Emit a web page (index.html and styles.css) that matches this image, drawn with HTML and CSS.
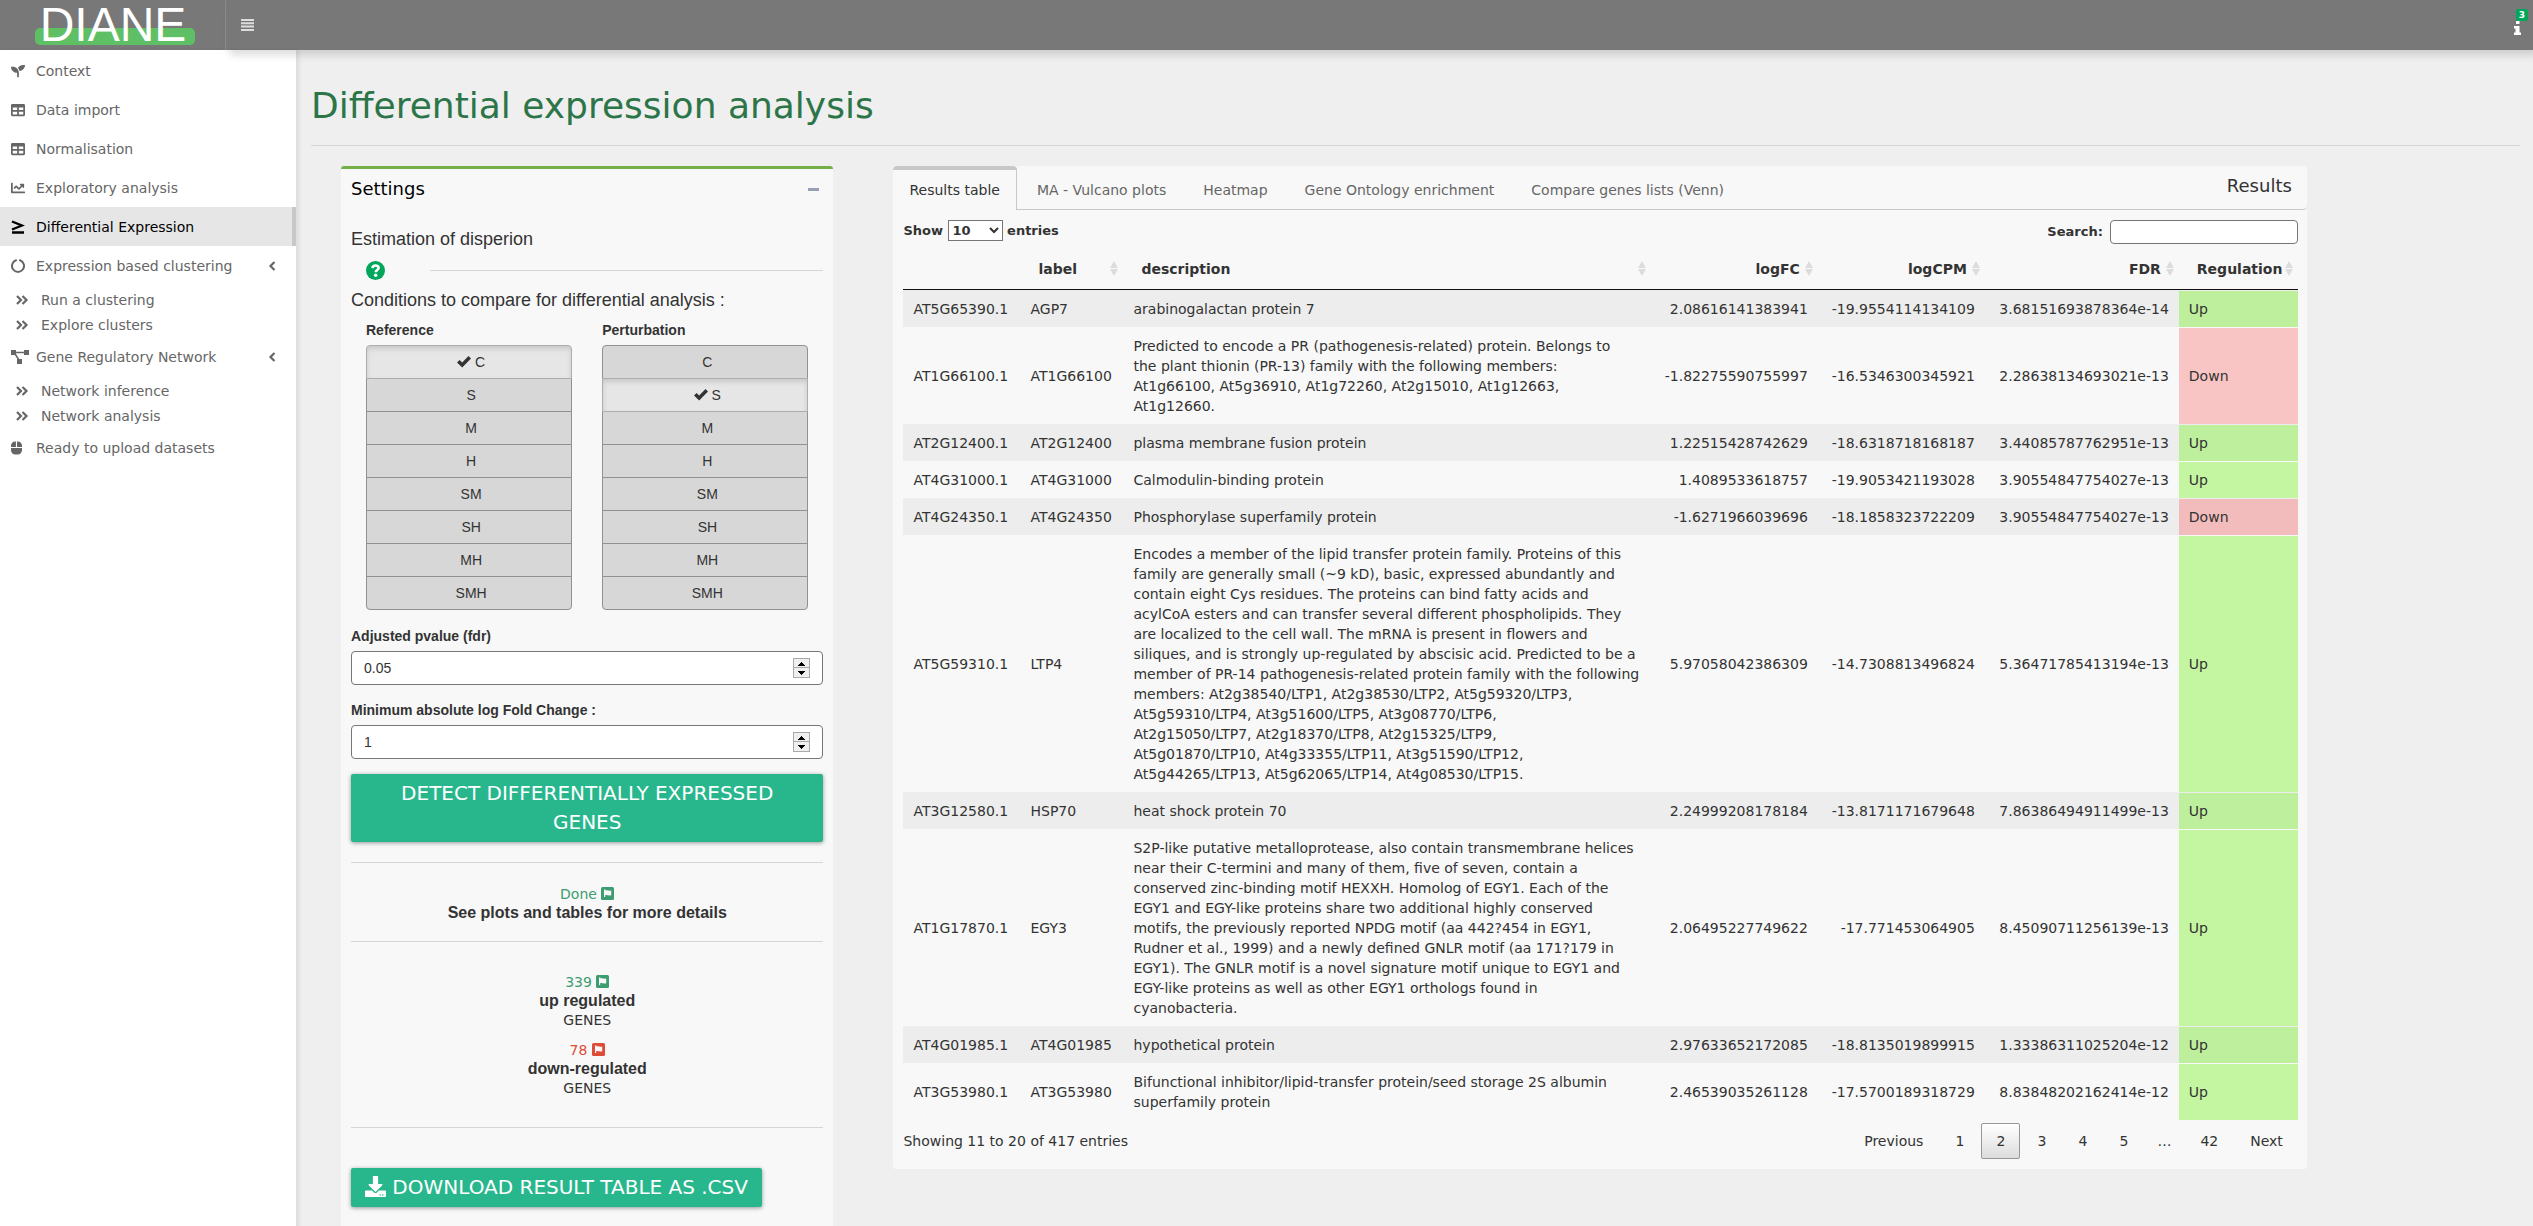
FILE: index.html
```html
<!DOCTYPE html>
<html lang="en">
<head>
<meta charset="utf-8">
<title>DIANE</title>
<link rel="stylesheet" href="styles.css">
</head>
<body>
<svg class="defs" aria-hidden="true">
  <symbol id="i-seedling" viewBox="0 0 512 512"><path d="M64 96H0c0 123.700 100.300 224 224 224v144c0 8.800 7.200 16 16 16h32c8.800 0 16-7.200 16-16V320C288 196.300 187.700 96 64 96zm384-64c-84.200 0-157.400 46.500-195.700 115.200 27.700 30.200 48.200 66.900 59 107.600C424 243.100 512 147.900 512 32h-64z"/></symbol>
  <symbol id="i-table" viewBox="0 0 512 512"><path d="M464 32H48C21.490 32 0 53.490 0 80v352c0 26.510 21.490 48 48 48h416c26.510 0 48-21.490 48-48V80c0-26.510-21.490-48-48-48zM224 416H64v-96h160v96zm0-160H64v-96h160v96zm224 160H288v-96h160v96zm0-160H288v-96h160v96z"/></symbol>
  <symbol id="i-chart" viewBox="0 0 512 512"><path d="M496 384H64V80c0-8.840-7.160-16-16-16H16C7.160 64 0 71.160 0 80v336c0 17.670 14.330 32 32 32h464c8.840 0 16-7.160 16-16v-32c0-8.840-7.160-16-16-16zM464 96H345.940c-21.380 0-32.090 25.850-16.970 40.970l32.400 32.400L288 242.750l-73.370-73.370c-12.500-12.500-32.760-12.500-45.250 0l-68.690 68.690c-6.250 6.250-6.250 16.380 0 22.630l22.620 22.620c6.250 6.250 16.380 6.250 22.630 0L192 237.250l73.370 73.370c12.500 12.500 32.760 12.500 45.250 0l96-96 32.400 32.400c15.120 15.120 40.970 4.410 40.970-16.970V112c.01-8.840-7.150-16-15.990-16z"/></symbol>
  <symbol id="i-gte" viewBox="0 0 14 14"><path d="M1 1.500 11 5.500 1 9.500M1 12.500h12" fill="none" stroke="currentColor" stroke-width="2.400"/></symbol>
  <symbol id="i-notch" viewBox="0 0 14 14"><path d="M5 1.300a6 6 0 1 0 4 0" fill="none" stroke="currentColor" stroke-width="2" stroke-linecap="round"/></symbol>
  <symbol id="i-double" viewBox="0 0 14 14"><path d="M2 3l4 4-4 4M7.500 3l4 4-4 4" fill="none" stroke="currentColor" stroke-width="2.200"/></symbol>
  <symbol id="i-project" viewBox="0 0 18 14"><path d="M0 0h5v5H0zM13 0h5v5h-5zM6 9h5v5H6zM5 1.800h8v1.500H5zM3.500 4.500l1.400-.8L8.300 9l-1.400.8z"/></symbol>
  <symbol id="i-mouse" viewBox="0 0 12 14"><path d="M0 6V4.500A4.500 4.500 0 0 1 4.500 0h.9v6zM6.600 0h.9A4.500 4.500 0 0 1 12 4.500V6H6.600zM0 7h12v2.500A4.500 4.500 0 0 1 7.500 14h-3A4.500 4.500 0 0 1 0 9.500z"/></symbol>
  <symbol id="i-left" viewBox="0 0 8 10"><path d="M6.500 1 2.500 5l4 4" fill="none" stroke="currentColor" stroke-width="2.200"/></symbol>
  <symbol id="i-check" viewBox="0 0 14 12"><path d="M0 6.500 2.600 4l2.600 2.500L11.500 0 14 2.500 5.200 11.500z"/></symbol>
  <symbol id="i-download" viewBox="0 0 512 512"><path d="M216 0h80c13.300 0 24 10.700 24 24v168h87.700c17.800 0 26.700 21.500 14.100 34.100L269.700 378.300c-7.500 7.500-19.800 7.500-27.300 0L90.100 226.100c-12.600-12.600-3.700-34.100 14.100-34.100H192V24c0-13.300 10.700-24 24-24zm296 376v112c0 13.300-10.700 24-24 24H24c-13.300 0-24-10.700-24-24V376c0-13.300 10.700-24 24-24h146.700l49 49c20.100 20.100 52.500 20.100 72.600 0l49-49H488c13.300 0 24 10.700 24 24zm-124 88c0-11-9-20-20-20s-20 9-20 20 9 20 20 20 20-9 20-20zm64 0c0-11-9-20-20-20s-20 9-20 20 9 20 20 20 20-9 20-20z"/></symbol>
  <symbol id="i-flag" viewBox="0 0 13 13"><rect width="13" height="13" rx="1.500"/><path d="M3 2.500h1.200l.6.900c1.500-.5 2.500.8 5.400.1v4.800c-2.600.8-4-.6-6-.1V10H3z" fill="#f8f8f8"/></symbol>
  <symbol id="i-help" viewBox="0 0 20 20"><circle cx="10" cy="10" r="10"/><path d="M6.800 7.600C7 5.500 8.300 4.700 10 4.700c2 0 3.200 1 3.200 2.500 0 2.300-2.900 2.200-2.900 4.600" fill="none" stroke="#fff" stroke-width="2.800"/><circle cx="10.200" cy="15" r="1.800" fill="#fff"/></symbol>
  <symbol id="i-bars" viewBox="0 0 13 12"><path d="M0 0h13v2H0zM0 3.300h13v2H0zM0 6.600h13v2H0zM0 10h13v2H0z"/></symbol>
  <symbol id="i-info" viewBox="0 0 7 14"><path d="M2 0h3.500v3H2zM0 5h5.500v6.500H7V14H0v-2.500h1.500v-4H0z"/></symbol>
  <symbol id="i-sort" viewBox="0 0 8 15"><path d="M4 0l4 7H0zM0 8h8l-4 7z"/></symbol>
</svg>

<header class="topbar">
  <a class="logo" href="#">DIANE</a>
  <nav class="topnav">
    <button class="icon-button" aria-label="Toggle navigation"><svg class="bars"><use href="#i-bars"/></svg></button>
    <a class="info" href="#" aria-label="Information"><svg><use href="#i-info"/></svg><span class="badge">3</span></a>
  </nav>
</header>

<div class="shell">
  <aside class="sidebar">
    <a class="item" href="#"><svg><use href="#i-seedling"/></svg>Context</a>
    <a class="item" href="#"><svg><use href="#i-table"/></svg>Data import</a>
    <a class="item" href="#"><svg><use href="#i-table"/></svg>Normalisation</a>
    <a class="item" href="#"><svg><use href="#i-chart"/></svg>Exploratory analysis</a>
    <a class="item active" href="#"><svg><use href="#i-gte"/></svg>Differential Expression</a>
    <a class="item" href="#"><svg><use href="#i-notch"/></svg>Expression based clustering<svg class="caret"><use href="#i-left"/></svg></a>
    <div class="submenu">
      <a class="subitem" href="#"><svg><use href="#i-double"/></svg>Run a clustering</a>
      <a class="subitem" href="#"><svg><use href="#i-double"/></svg>Explore clusters</a>
    </div>
    <a class="item" href="#"><svg class="wide"><use href="#i-project"/></svg>Gene Regulatory Network<svg class="caret"><use href="#i-left"/></svg></a>
    <div class="submenu">
      <a class="subitem" href="#"><svg><use href="#i-double"/></svg>Network inference</a>
      <a class="subitem" href="#"><svg><use href="#i-double"/></svg>Network analysis</a>
    </div>
    <a class="item" href="#"><svg class="narrow"><use href="#i-mouse"/></svg>Ready to upload datasets</a>
  </aside>

  <main class="content">
    <h1>Differential expression analysis</h1>
    <hr class="title-rule">
    <div class="columns">
      <section class="card settings">
        <div class="card-head"><h2>Settings</h2><button class="collapse" aria-label="Collapse"></button></div>
        <h3>Estimation of disperion</h3>
        <div class="help-row"><button class="help" aria-label="Help"><svg><use href="#i-help"/></svg></button><hr></div>
        <h3>Conditions to compare for differential analysis :</h3>
        <div class="choices">
          <div class="choice">
            <span class="label" id="ref">Reference</span>
            <div class="group" role="group" aria-labelledby="ref">
              <button class="on"><svg><use href="#i-check"/></svg> C</button><button>S</button><button>M</button><button>H</button><button>SM</button><button>SH</button><button>MH</button><button>SMH</button>
            </div>
          </div>
          <div class="choice">
            <span class="label" id="per">Perturbation</span>
            <div class="group" role="group" aria-labelledby="per">
              <button>C</button><button class="on"><svg><use href="#i-check"/></svg> S</button><button>M</button><button>H</button><button>SM</button><button>SH</button><button>MH</button><button>SMH</button>
            </div>
          </div>
        </div>
        <div class="field"><label class="label" for="fdr">Adjusted pvalue (fdr)</label><input id="fdr" type="number" step="0.01" value="0.05"></div>
        <div class="field"><label class="label" for="lfc">Minimum absolute log Fold Change :</label><input id="lfc" type="number" value="1"></div>
        <button class="action">Detect differentially expressed genes</button>
        <hr>
        <div class="stat done"><span class="value green">Done <svg><use href="#i-flag"/></svg></span><strong>See plots and tables for more details</strong></div>
        <hr>
        <div class="stats">
          <div class="stat"><span class="value green">339 <svg><use href="#i-flag"/></svg></span><strong>up regulated</strong><span>GENES</span></div>
          <div class="stat"><span class="value red">78 <svg><use href="#i-flag"/></svg></span><strong>down-regulated</strong><span>GENES</span></div>
        </div>
        <hr>
        <button class="action download"><svg><use href="#i-download"/></svg> Download result table as .csv</button>
      </section>

      <section class="card results">
        <div class="tabs">
          <a class="tab current" href="#">Results table</a>
          <a class="tab" href="#">MA - Vulcano plots</a>
          <a class="tab" href="#">Heatmap</a>
          <a class="tab" href="#">Gene Ontology enrichment</a>
          <a class="tab" href="#">Compare genes lists (Venn)</a>
          <h2>Results</h2>
        </div>
        <div class="panel">
          <div class="controls">
            <label>Show <select><option>10</option></select> entries</label>
            <label class="search">Search:<input type="search"></label>
          </div>
          <table>
            <colgroup><col class="c-id"><col class="c-label"><col><col class="c-num"><col class="c-num"><col class="c-fdr"><col class="c-reg"></colgroup>
            <thead><tr>
              <th></th>
              <th>label<svg><use href="#i-sort"/></svg></th>
              <th>description<svg><use href="#i-sort"/></svg></th>
              <th class="num">logFC<svg><use href="#i-sort"/></svg></th>
              <th class="num">logCPM<svg><use href="#i-sort"/></svg></th>
              <th class="num">FDR<svg><use href="#i-sort"/></svg></th>
              <th>Regulation<svg><use href="#i-sort"/></svg></th>
            </tr></thead>
            <tbody>
              <tr><td>AT5G65390.1</td><td>AGP7</td><td>arabinogalactan protein 7</td><td class="num">2.08616141383941</td><td class="num">-19.9554114134109</td><td class="num">3.68151693878364e-14</td><td class="up">Up</td></tr>
              <tr><td>AT1G66100.1</td><td>AT1G66100</td><td>Predicted to encode a PR (pathogenesis-related) protein. Belongs to<br>the plant thionin (PR-13) family with the following members:<br>At1g66100, At5g36910, At1g72260, At2g15010, At1g12663,<br>At1g12660.</td><td class="num">-1.82275590755997</td><td class="num">-16.5346300345921</td><td class="num">2.28638134693021e-13</td><td class="down">Down</td></tr>
              <tr><td>AT2G12400.1</td><td>AT2G12400</td><td>plasma membrane fusion protein</td><td class="num">1.22515428742629</td><td class="num">-18.6318718168187</td><td class="num">3.44085787762951e-13</td><td class="up">Up</td></tr>
              <tr><td>AT4G31000.1</td><td>AT4G31000</td><td>Calmodulin-binding protein</td><td class="num">1.4089533618757</td><td class="num">-19.9053421193028</td><td class="num">3.90554847754027e-13</td><td class="up">Up</td></tr>
              <tr><td>AT4G24350.1</td><td>AT4G24350</td><td>Phosphorylase superfamily protein</td><td class="num">-1.6271966039696</td><td class="num">-18.1858323722209</td><td class="num">3.90554847754027e-13</td><td class="down">Down</td></tr>
              <tr><td>AT5G59310.1</td><td>LTP4</td><td>Encodes a member of the lipid transfer protein family. Proteins of this family are generally small (~9 kD), basic, expressed abundantly and contain eight Cys residues. The proteins can bind fatty acids and acylCoA esters and can transfer several different phospholipids. They are localized to the cell wall. The mRNA is present in flowers and siliques, and is strongly up-regulated by abscisic acid. Predicted to be a member of PR-14 pathogenesis-related protein family with the following members: At2g38540/LTP1, At2g38530/LTP2, At5g59320/LTP3,<br>At5g59310/LTP4, At3g51600/LTP5, At3g08770/LTP6,<br>At2g15050/LTP7, At2g18370/LTP8, At2g15325/LTP9,<br>At5g01870/LTP10, At4g33355/LTP11, At3g51590/LTP12,<br>At5g44265/LTP13, At5g62065/LTP14, At4g08530/LTP15.</td><td class="num">5.97058042386309</td><td class="num">-14.7308813496824</td><td class="num">5.36471785413194e-13</td><td class="up">Up</td></tr>
              <tr><td>AT3G12580.1</td><td>HSP70</td><td>heat shock protein 70</td><td class="num">2.24999208178184</td><td class="num">-13.8171171679648</td><td class="num">7.86386494911499e-13</td><td class="up">Up</td></tr>
              <tr><td>AT1G17870.1</td><td>EGY3</td><td>S2P-like putative metalloprotease, also contain transmembrane helices near their C-termini and many of them, five of seven, contain a conserved zinc-binding motif HEXXH. Homolog of EGY1. Each of the EGY1 and EGY-like proteins share two additional highly conserved motifs, the previously reported NPDG motif (aa 442?454 in EGY1, Rudner et al., 1999) and a newly defined GNLR motif (aa 171?179 in EGY1). The GNLR motif is a novel signature motif unique to EGY1 and EGY-like proteins as well as other EGY1 orthologs found in cyanobacteria.</td><td class="num">2.06495227749622</td><td class="num">-17.771453064905</td><td class="num">8.45090711256139e-13</td><td class="up">Up</td></tr>
              <tr><td>AT4G01985.1</td><td>AT4G01985</td><td>hypothetical protein</td><td class="num">2.97633652172085</td><td class="num">-18.8135019899915</td><td class="num">1.33386311025204e-12</td><td class="up">Up</td></tr>
              <tr><td>AT3G53980.1</td><td>AT3G53980</td><td>Bifunctional inhibitor/lipid-transfer protein/seed storage 2S albumin superfamily protein</td><td class="num">2.46539035261128</td><td class="num">-17.5700189318729</td><td class="num">8.83848202162414e-12</td><td class="up">Up</td></tr>
            </tbody>
          </table>
          <div class="table-foot">
            <span>Showing 11 to 20 of 417 entries</span>
            <nav class="pages"><a href="#">Previous</a><a href="#">1</a><a class="here" href="#">2</a><a href="#">3</a><a href="#">4</a><a href="#">5</a><span class="gap">…</span><a href="#">42</a><a href="#">Next</a></nav>
          </div>
        </div>
      </section>
    </div>
  </main>
</div>
</body>
</html>
```
FILE: styles.css
```css
* { box-sizing: border-box; }

body {
  margin: 0;
  min-height: 100vh;
  display: flex;
  flex-direction: column;
  background: #efefef;
  color: #333;
  font: 14px/20px Verdana, "DejaVu Sans", sans-serif;
}

a { color: inherit; text-decoration: none; }
button { font: inherit; color: inherit; cursor: pointer; }
svg { fill: currentColor; }
h1, h2, h3 { margin: 0; font-weight: 400; }
hr { width: 100%; height: 1px; margin: 0; border: 0; flex: none; background: #d6d6d6; }
.defs { display: none; }

/* Top bar */
.topbar { display: flex; height: 50px; background: #787878; color: #fff; }
.logo {
  position: relative;
  z-index: 0;
  display: flex;
  justify-content: center;
  width: 230px;
  padding-right: 4px;
  font: 48px/50px Arial, "Liberation Sans", sans-serif;
}
.logo::before {
  content: "";
  position: absolute;
  z-index: -1;
  inset: 28px 35px 5px;
  border-radius: 5px;
  background: #5fbf64;
}
.topnav {
  flex: 1;
  display: flex;
  align-items: center;
  justify-content: space-between;
  padding: 0 12px 0 10px;
  margin-left: -5px;
  border-left: 1px solid #8a8a8a;
  box-shadow: 5px 5px 8px rgba(0, 0, 0, .14);
  z-index: 2;
}
.icon-button { padding: 5px; border: 0; background: none; color: #ddd; display: flex; }
.bars { width: 13px; height: 12px; }
.info { position: relative; display: flex; align-items: flex-end; height: 20px; }
.info svg { width: 7px; height: 14px; }
.badge {
  position: absolute;
  left: 2px;
  top: -6px;
  width: 12px;
  height: 12px;
  border-radius: 2px;
  background: #00a65a;
  font: bold 9px/12px Verdana, "DejaVu Sans", sans-serif;
  text-align: center;
}

/* Sidebar */
.shell { flex: 1; display: flex; }
.sidebar {
  width: 296px;
  padding-top: 1px;
  background: #fff;
  color: #666;
  box-shadow: 3px 0 4px rgba(0, 0, 0, .08);
}
.item { display: flex; align-items: center; height: 39px; padding: 0 20px 0 11px; }
.item svg { width: 14px; height: 14px; margin-right: 11px; }
.item .wide { width: 18px; margin-right: 7px; }
.item .narrow { width: 11px; margin-right: 14px; }
.item .caret { width: 8px; height: 10px; margin: 0 0 0 auto; }
.active { background: #e6e6e6; color: #000; border-right: 4px solid #c8c8c8; }
.submenu { padding-top: 2px; }
.subitem { display: flex; align-items: center; height: 25px; padding-left: 15px; }
.subitem svg { width: 14px; height: 14px; margin-right: 12px; }

/* Page */
.content { flex: 1; display: flex; flex-direction: column; padding: 36px 13px 0 15px; }
h1 { font-size: 36px; line-height: 40px; color: #2c7548; }
.title-rule { margin: 19px 0 20px; }
.columns {
  flex: 1;
  display: grid;
  grid-template-columns: 492fr 1412fr 153fr;
  gap: 60px;
  padding-left: 30px;
}
.card { background: #f8f8f8; border-radius: 3px; }
h2 { font-size: 18px; line-height: 20px; }
h3 { font: 18px/20px Arial, "Liberation Sans", sans-serif; }

/* Settings */
.settings {
  display: flex;
  flex-direction: column;
  padding: 0 10px 20px;
  border-top: 3px solid #72af46;
  font-family: Arial, "Liberation Sans", sans-serif;
}
.card-head { display: flex; align-items: center; justify-content: space-between; height: 40px; margin-bottom: 20px; color: #000; }
.card-head h2 { font-family: Verdana, "DejaVu Sans", sans-serif; }
.collapse { width: 20px; height: 20px; border: 0; background: linear-gradient(#97a0b3, #97a0b3) center / 11px 3px no-repeat; }
.help-row { display: flex; align-items: center; gap: 45px; height: 20px; margin: 11px 0 10px; padding-left: 15px; }
.help-row hr { flex: 1; width: auto; }
.help { display: flex; flex: none; padding: 0; border: 0; background: none; color: #00a65a; }
.help svg { width: 19px; height: 19px; }
.choices { display: grid; grid-template-columns: 1fr 1fr; gap: 30px; margin: 10px 15px 1px; }
.label { display: block; margin-bottom: 5px; font-weight: 700; }
.group { display: flex; flex-direction: column; }
.group button {
  height: 34px;
  margin-bottom: -1px;
  padding: 0 0 0 4px;
  border: 1px solid #919191;
  background: #d7d7d7;
}
.group button:first-child { border-radius: 4px 4px 0 0; }
.group button:last-child { margin-bottom: 0; border-radius: 0 0 4px 4px; }
.group .on { position: relative; border-color: #adadad; background: #e6e6e6; box-shadow: inset 0 3px 5px rgba(0, 0, 0, .125); }
.group svg { width: 14px; height: 12px; vertical-align: -1px; }
.field { margin-top: 15px; }
.field input {
  display: block;
  width: 100%;
  height: 34px;
  padding: 6px 12px;
  border: 1px solid #767676;
  border-radius: 4px;
  background: #fff;
  color: #333;
  font: inherit;
}
.field input::-webkit-inner-spin-button {
  -webkit-appearance: none;
  width: 15px;
  height: 18px;
  opacity: 1;
  border: 1px solid #aaa;
  background:
    conic-gradient(from 135deg at 50% 0, #000 90deg, transparent 0) 50% 3px / 7px 4px no-repeat,
    conic-gradient(from -45deg at 50% 100%, #000 90deg, transparent 0) 50% 12px / 7px 4px no-repeat,
    linear-gradient(#aaa, #aaa) 0 8px / 15px 1px no-repeat,
    #efefef;
}
.action {
  margin: 15px 0 20px;
  padding: 5px 14px;
  border: 0;
  border-radius: 2px;
  background: #28b78d;
  box-shadow: 0 1px 4px rgba(0, 0, 0, .4);
  color: #fff;
  font: 20px/29px Verdana, "DejaVu Sans", sans-serif;
  text-transform: uppercase;
}
.stat { display: flex; flex-direction: column; align-items: center; font-family: Verdana, "DejaVu Sans", sans-serif; }
.stat strong { font: bold 16px/18px Arial, "Liberation Sans", sans-serif; }
.value svg { width: 13px; height: 13px; vertical-align: -1px; }
.green { color: #3c9d70; }
.red { color: #dd4b39; }
.done { margin: 21px 0 19px; }
.stats { display: flex; flex-direction: column; gap: 10px; margin: 30px 0 29px; }
.download { align-self: flex-start; margin-top: 40px; }
.download svg { width: 21px; height: 21px; vertical-align: -3px; }

/* Results */
.results { align-self: start; min-width: 0; }
.tabs { display: flex; height: 44px; border-bottom: 1px solid #c8c8c8; border-radius: 0 0 4px 0; }
.tab { padding: 14px 17px 0 20px; color: #666; }
.current {
  padding: 10px 16px 0;
  height: 44px;
  border-top: 4px solid #c8c8c8;
  border-right: 1px solid #c8c8c8;
  border-radius: 4px 4px 0 0;
  background: #f8f8f8;
  color: #333;
}
.tabs h2 { margin-left: auto; padding: 10px 15px 0 0; }
.panel { padding: 10px 9px 10px 10px; }
.controls { display: flex; justify-content: space-between; align-items: flex-start; height: 29px; font-size: 13px; font-weight: 700; }
.controls select { width: 55px; height: 21px; padding: 0; border: 1px solid #767676; background: #fff; color: #333; font: inherit; }
.controls input { width: 188px; height: 24px; border: 1px solid #767676; border-radius: 4px; background: #fff; font: inherit; }
.search { display: flex; align-items: center; gap: 7px; }
table { width: 100%; table-layout: fixed; border-collapse: separate; border-spacing: 0; }
.c-id { width: 117px; }
.c-label { width: 103px; }
.c-num { width: 167px; }
.c-fdr { width: 194px; }
.c-reg { width: 119px; }
th { position: relative; padding: 10px 18px; border-bottom: 1px solid #111; text-align: left; }
th svg { position: absolute; right: 5px; top: 12px; width: 8px; height: 15px; color: #dcdcdc; }
td { padding: 8px 10px; border-top: 1px solid transparent; }
tbody tr:nth-child(odd) { background: #ededed; }
.num { text-align: right; }
td.up, td.down { background-clip: padding-box; }
.up { background-color: #c4f5a1; }
.down { background-color: #f9c4c4; }
tr:nth-child(odd) .up { background-color: #bdef9c; }
tr:nth-child(odd) .down { background-color: #f2bcbc; }
.table-foot { display: flex; justify-content: space-between; align-items: center; margin-top: 3px; }
.pages { display: flex; gap: 2px; }
.pages > * { min-width: 39px; padding: 7px 14px; border: 1px solid transparent; border-radius: 2px; text-align: center; }
.pages .gap { min-width: 0; padding: 7px 11px; }
.pages .here { border-color: #979797; background: linear-gradient(#fff, #dcdcdc); }
```
